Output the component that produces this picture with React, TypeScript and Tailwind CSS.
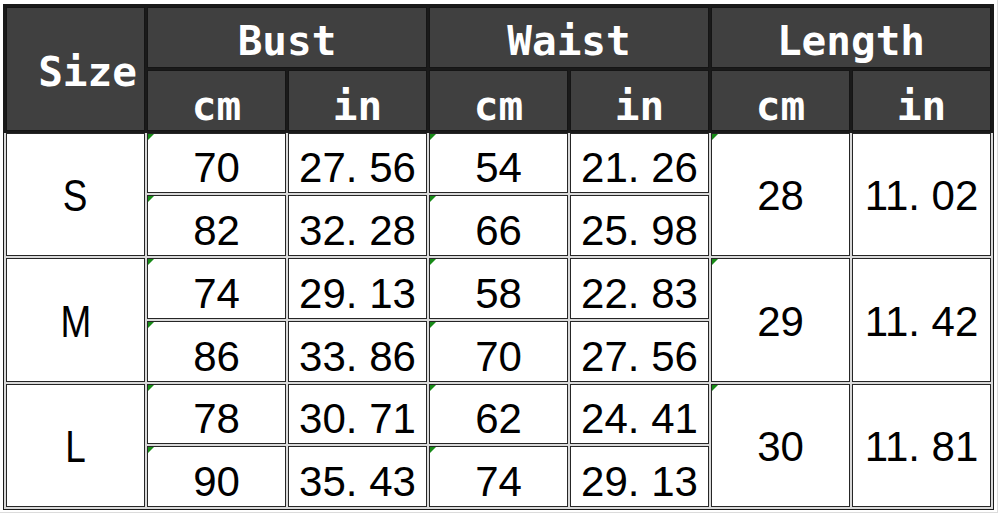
import type { ReactNode } from 'react';

type SizeGroup = {
  size: string;
  rows: [string, string, string, string][];
  length: [string, string];
};

const groups: SizeGroup[] = [
  {
    size: 'S',
    rows: [
      ['70', '27.56', '54', '21.26'],
      ['82', '32.28', '66', '25.98'],
    ],
    length: ['28', '11.02'],
  },
  {
    size: 'M',
    rows: [
      ['74', '29.13', '58', '22.83'],
      ['86', '33.86', '70', '27.56'],
    ],
    length: ['29', '11.42'],
  },
  {
    size: 'L',
    rows: [
      ['78', '30.71', '62', '24.41'],
      ['90', '35.43', '74', '29.13'],
    ],
    length: ['30', '11.81'],
  },
];

// excel renders the decimal point with a wide gap after it
function Num({ value }: { value: string }) {
  const [whole, frac] = value.split('.');
  if (frac === undefined) return <>{whole}</>;
  return (
    <>
      {whole}
      <span className="mr-[0.278em]">.</span>
      {frac}
    </>
  );
}

function HeadCell({ children, className = '' }: { children: ReactNode; className?: string }) {
  return (
    <div
      className={`flex justify-center border border-[#151515] bg-[#404040] font-['DejaVu_Sans_Mono',monospace] text-[41px] font-bold text-white shadow-[0_0_0_2px_#1a1a1a] ${className}`}
    >
      {children}
    </div>
  );
}

function DataCell({
  children,
  flag = false,
  className = 'items-end leading-[49px]',
}: {
  children: ReactNode;
  flag?: boolean;
  className?: string;
}) {
  return (
    <div
      className={`relative flex justify-center border border-[#262626] bg-white font-['Liberation_Sans',Arial,sans-serif] text-[42px] text-black ${className}`}
    >
      {flag ? (
        <div className="absolute left-0 top-0 h-0 w-0 border-r-[6px] border-t-[6px] border-r-transparent border-t-[#178a17]" />
      ) : null}
      {children}
    </div>
  );
}

export default function App() {
  return (
    <div className="h-[517px] w-[1001px] overflow-hidden bg-white">
      <div className="h-[513px] w-[998px] border-b border-r border-[#dcdcdc] pl-[3px] pt-[4px]">
        <div className="h-[506px] w-[991px] border border-[#1a1a1a] bg-[#d9d9d9] p-[2px]">
          <div className="grid h-full grid-cols-[repeat(7,139px)] grid-rows-[repeat(8,minmax(0,1fr))] gap-[2px]">
            <HeadCell className="row-span-2 items-center pl-[24px] pt-[8px] leading-normal">Size</HeadCell>
            <HeadCell className="col-span-2 items-end leading-[52px]">Bust</HeadCell>
            <HeadCell className="col-span-2 items-end leading-[52px]">Waist</HeadCell>
            <HeadCell className="col-span-2 items-end leading-[52px]">Length</HeadCell>
            {['cm', 'in', 'cm', 'in', 'cm', 'in'].map((unit, i) => (
              <HeadCell key={i} className="items-end leading-[47px]">
                {unit}
              </HeadCell>
            ))}

            {groups.map((group) => (
              <GroupRows key={group.size} group={group} />
            ))}
          </div>
        </div>
      </div>
    </div>
  );
}

function GroupRows({ group }: { group: SizeGroup }) {
  const [first, second] = group.rows;
  return (
    <>
      <DataCell className="row-span-2 items-center pt-[3px] leading-normal">
        <span className="inline-block scale-x-[0.82] text-[45px]">{group.size}</span>
      </DataCell>
      {first.map((v, i) => (
        <DataCell key={`a${i}`} flag={i % 2 === 0}>
          <Num value={v} />
        </DataCell>
      ))}
      <DataCell className="row-span-2 items-center pt-[3px] leading-normal" flag>
        <Num value={group.length[0]} />
      </DataCell>
      <DataCell className="row-span-2 items-center pt-[3px] leading-normal">
        <Num value={group.length[1]} />
      </DataCell>
      {second.map((v, i) => (
        <DataCell key={`b${i}`} flag={i % 2 === 0}>
          <Num value={v} />
        </DataCell>
      ))}
    </>
  );
}
